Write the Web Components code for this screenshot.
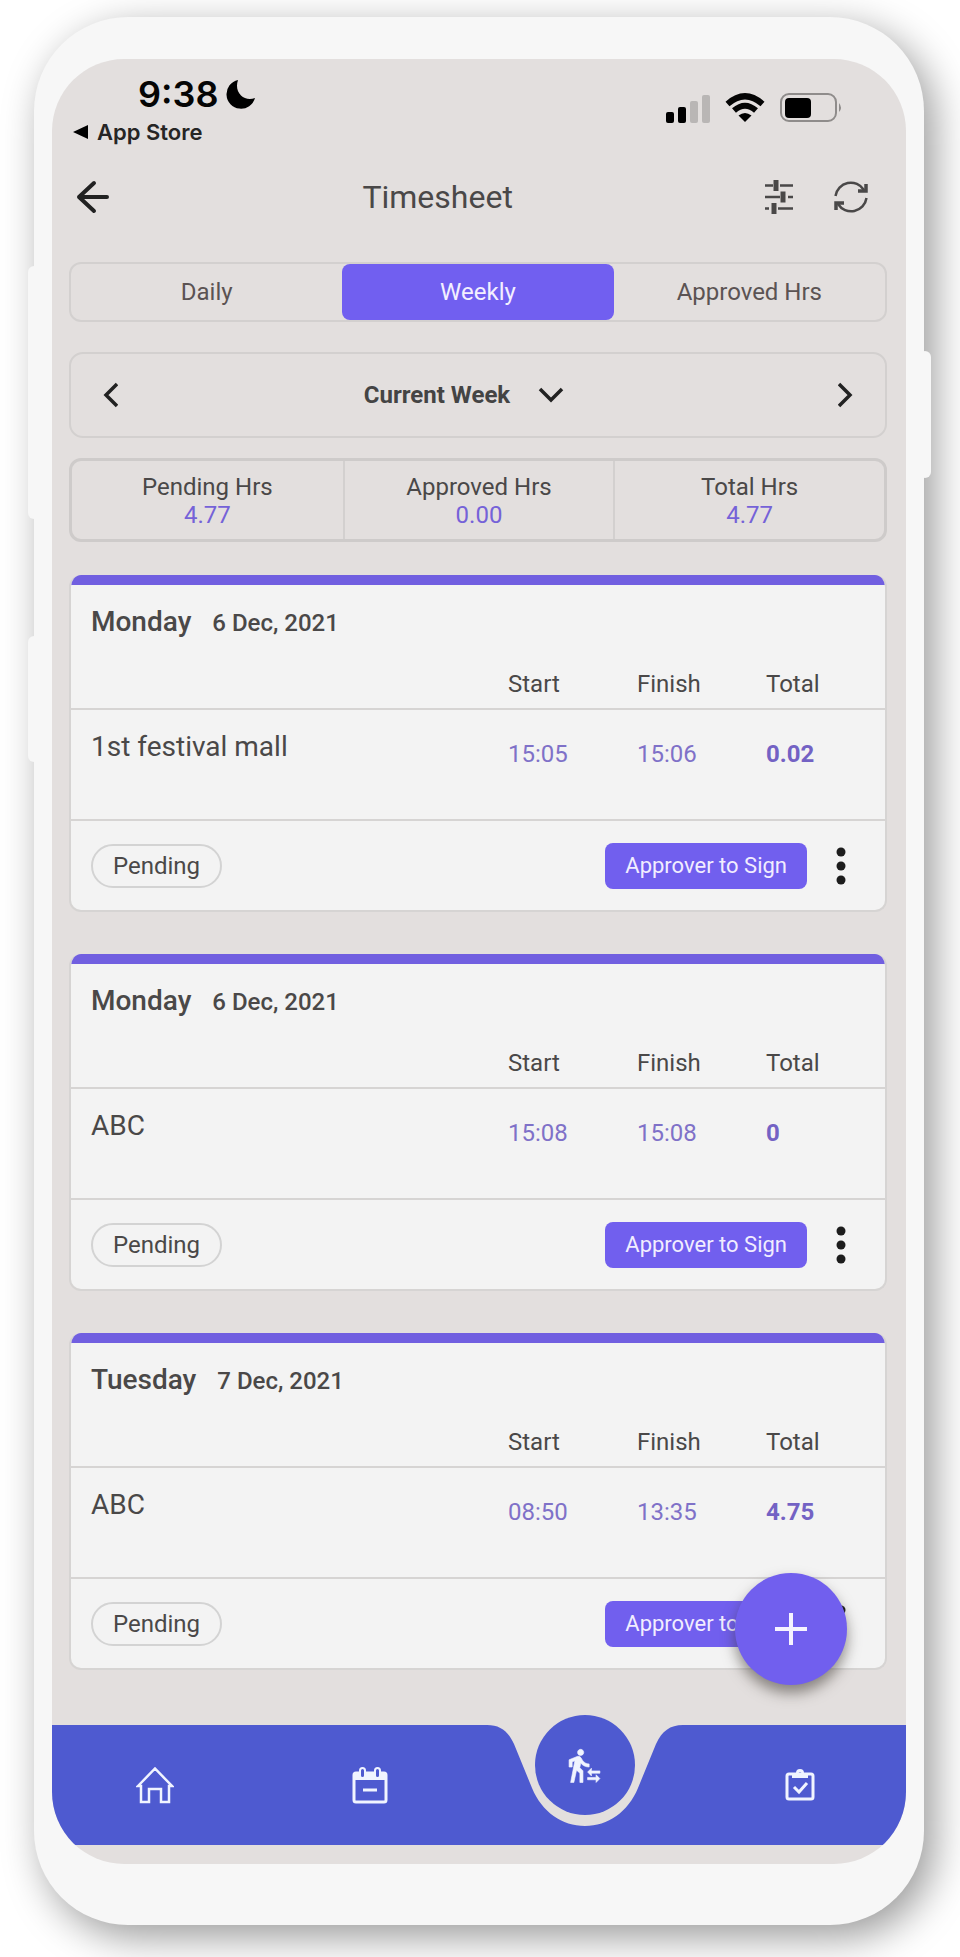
<!DOCTYPE html>
<html lang="en">
<head>
<meta charset="utf-8">
<meta name="viewport" content="width=device-width, initial-scale=1">
<title>Timesheet</title>
<style>
  body { margin: 0; background: #fff; font-family: Roboto, "Liberation Sans", sans-serif; color: #4a4848; }
</style>
</head>
<body>
<phone-frame>
  <status-bar></status-bar>
  <app-header>Timesheet</app-header>
  <main>
    <tab-switch></tab-switch>
    <week-picker>Current Week</week-picker>
    <hours-summary></hours-summary>
    <shift-card day="Monday" date="6 Dec, 2021" start="15:05" finish="15:06" total="0.02">1st festival mall</shift-card>
    <shift-card day="Monday" date="6 Dec, 2021" start="15:08" finish="15:08" total="0">ABC</shift-card>
    <shift-card day="Tuesday" date="7 Dec, 2021" start="08:50" finish="13:35" total="4.75">ABC</shift-card>
  </main>
  <add-button slot="floating"></add-button>
  <bottom-nav slot="nav"></bottom-nav>
</phone-frame>

<script>
const define = (name, html) => {
  const template = document.createElement('template');
  template.innerHTML = html;
  customElements.define(name, class extends HTMLElement {
    constructor() {
      super();
      const root = this.attachShadow({ mode: 'open' });
      root.append(template.content.cloneNode(true));
      root.querySelectorAll('[data-attr]').forEach(el => {
        el.textContent = this.getAttribute(el.dataset.attr);
      });
    }
  });
};

define('phone-frame', `
<style>
  :host { display: block; position: relative; margin: 17px 36px 32px 34px; padding: 42px 18px 61px; border-radius: 94px; background: #f7f7f7;
    box-shadow: 10px 12px 40px rgba(0,0,0,.4); }
  .key { position: absolute; width: 12px; background: #f7f7f7; border-radius: 6px; }
  .up { left: -6px; top: 249px; height: 253px; }
  .down { left: -6px; top: 619px; height: 126px; }
  .power { right: -7px; top: 334px; height: 127px; }
  .screen { position: relative; border-radius: 72px; overflow: hidden; background: #e3dfde; padding-bottom: 19px; }
  ::slotted(main) { display: flex; flex-direction: column; padding: 0 19px 0 17px; }
</style>
<span class="key up"></span><span class="key down"></span><span class="key power"></span>
<div class="screen"><slot></slot><slot name="floating"></slot><slot name="nav"></slot></div>`);

define('status-bar', `
<style>
  :host { display: flex; justify-content: space-between; padding: 13px 63px 0 21px; height: 88px; box-sizing: border-box; font-family: Inter, sans-serif; color: #050505; }
  .time { display: flex; align-items: center; gap: 8px; padding-left: 65px; font-size: 36px; line-height: 44px; font-weight: 600; }
  .back { display: flex; align-items: center; gap: 9px; font-size: 22px; line-height: 32px; font-weight: 600; color: #262525; text-decoration: none; }
  .icons { display: flex; align-items: flex-start; padding-top: 20px; gap: 14px; }
</style>
<div>
  <div class="time">9:38<svg width="30" height="30" viewBox="0 0 30 30"><path d="M12 1A14.500 14.500 0 1 0 29 19C24 21 18.500 20 15 16.500C11 12.500 10 7 12 1Z"/></svg></div>
  <a class="back" href="#"><svg width="15" height="14"><path d="M0 7 15 0V14Z"/></svg>App Store</a>
</div>
<div class="icons">
  <svg width="46" height="32"><rect x="1" y="20" width="8" height="11" rx="2"/><rect x="13" y="15" width="8" height="16" rx="2"/><g fill="#b9b6b5"><rect x="25" y="9" width="8" height="22" rx="2"/><rect x="37" y="3" width="8" height="28" rx="2"/></g></svg>
  <svg width="40" height="32" viewBox="0 0 40 32"><g fill="none" stroke="#050505" stroke-width="6"><path d="M2.500 12Q20-3.500 37.500 12"/><path d="M9 18.500Q20 9 31 18.500"/></g><path d="M20 30 13.500 23.500Q20 18.500 26.500 23.500Z"/></svg>
  <svg width="64" height="32" viewBox="0 0 64 32"><rect x="2" y="2" width="55" height="27" rx="8" fill="none" stroke="#8f8c8b" stroke-width="2"/><rect x="6" y="6" width="26" height="20" rx="4"/><path d="M60 11q4 5 0 9z" fill="#8f8c8b"/></svg>
</div>`);

define('app-header', `
<style>
  :host { display: grid; grid-template-columns: 100fr auto 124fr; align-items: center; height: 99px; padding: 0 38px 0 24px; }
  h1 { margin: 0; font-size: 32px; line-height: 40px; font-weight: 400; }
  button { display: flex; border: 0; padding: 0; background: none; color: #4a4848; }
  svg { fill: none; stroke: currentColor; }
  .back { color: #222; }
  .tools { display: flex; justify-content: flex-end; gap: 40px; }
</style>
<button class="back" aria-label="Back"><svg width="34" height="34" viewBox="0 0 34 34" stroke-width="4" stroke-linecap="round" stroke-linejoin="round"><path d="M31 17H3M18 3 3 17 18 31"/></svg></button>
<h1><slot></slot></h1>
<div class="tools">
  <button aria-label="Filter"><svg width="30" height="36" viewBox="0 0 30 36"><path stroke-width="2.500" d="M1 6.500h8M16 6.500h13M1 18h15M24 18h5M1 29.500h4M14 29.500h15"/><path stroke-width="5" d="M12 1v11M19 12.500v11M10 24v11"/></svg></button>
  <button aria-label="Refresh"><svg width="34" height="36" viewBox="0 0 34 36" stroke-width="2.500"><path d="M1.500 17A15.500 15.500 0 0 1 30 11M32.500 19A15.500 15.500 0 0 1 4 25"/><path stroke-width="3.500" d="M32 5v7h-8M2 31v-7h8"/></svg></button>
</div>`);

define('tab-switch', `
<style>
  :host { display: grid; grid-template-columns: repeat(3, 1fr); height: 60px; box-sizing: border-box; border: 2px solid #d3d0cf; border-radius: 12px; margin: 16px 0 30px; }
  button { border: 0; background: none; font: 24px/28px Roboto, sans-serif; color: #5b5353; padding: 0; }
  .on { background: #715ff0; color: #f3efff; border-radius: 8px; }
</style>
<button>Daily</button><button class="on">Weekly</button><button>Approved Hrs</button>`);

define('week-picker', `
<style>
  :host { display: flex; align-items: center; justify-content: space-between; height: 86px; box-sizing: border-box; padding: 0 31px; border: 2px solid #d3d0cf; border-radius: 14px; margin-bottom: 20px; }
  button { display: flex; align-items: center; gap: 28px; border: 0; padding: 0; background: none; font: 700 24px/28px Roboto, sans-serif; color: #444; }
  .label { margin-right: 28px; }
  svg { fill: none; stroke: #222; stroke-width: 3.500; }
</style>
<button aria-label="Previous week"><svg width="16" height="26"><path d="M15 2 4 13 15 24"/></svg></button>
<button class="label"><slot></slot><svg width="26" height="16"><path d="M2 2 13 13 24 2"/></svg></button>
<button aria-label="Next week"><svg width="16" height="26"><path d="M1 2 12 13 1 24"/></svg></button>`);

define('hours-summary', `
<style>
  :host { display: block; border: 3px solid #cecbca; border-radius: 12px; margin-bottom: 33px; }
  dl { display: grid; grid-template-columns: repeat(3, 1fr); margin: 0; height: 78px; }
  div { display: flex; flex-direction: column; justify-content: center; text-align: center; font-size: 24px; line-height: 28px; padding-top: 2px; }
  div + div { border-left: 2px solid #d3d0cf; }
  dd { margin: 0; color: #7562d8; }
</style>
<dl><div><dt>Pending Hrs</dt><dd>4.77</dd></div><div><dt>Approved Hrs</dt><dd>0.00</dd></div><div><dt>Total Hrs</dt><dd>4.77</dd></div></dl>`);

define('shift-card', `
<style>
  :host { display: block; height: 337px; box-sizing: border-box; margin-bottom: 42px; border: 2px solid #d6d4d3; border-width: 0 2px 2px; border-radius: 12px; overflow: hidden; background: #f3f3f3; }
  header { display: flex; align-items: baseline; gap: 21px; border-top: 10px solid #715fe0; padding: 19px 20px 0; height: 52px; font-weight: 500; font-size: 24px; line-height: 36px; }
  h2 { margin: 0; font-size: 28px; font-weight: 500; line-height: 36px; }
  table { width: 100%; border-collapse: collapse; table-layout: fixed; font-size: 24px; line-height: 28px; }
  th, td { padding: 0; text-align: left; font-weight: 400; vertical-align: top; width: 129px; }
  th:first-child { width: 437px; }
  th:last-child, td:last-child { width: auto; }
  thead th { height: 53px; padding-top: 14px; box-sizing: border-box; }
  thead tr, tbody tr { border-bottom: 2px solid #d6d4d3; }
  tbody td { height: 79px; padding-top: 30px; color: #7f71c8; }
  tbody th { height: 86px; padding: 21px 0 0 20px; font-size: 28px; line-height: 32px; box-sizing: border-box; }
  tbody td:last-child { font-weight: 700; color: #7362c4; }
  footer { display: flex; align-items: center; padding: 0 39px 0 20px; height: 89px; }
  .state { border: 2px solid #d3d3d3; border-radius: 22px; padding: 6px 20px; font-size: 24px; line-height: 28px; margin-right: auto; }
  button { border: 0; background: none; padding: 0; display: flex; }
  .sign { background: #715fee; color: #f1edff; border-radius: 8px; font: 22px/28px Roboto, sans-serif; padding: 9px 20px; margin-right: 29px; }
</style>
<header><h2 data-attr="day"></h2><span data-attr="date"></span></header>
<table>
  <thead><tr><th></th><th>Start</th><th>Finish</th><th>Total</th></tr></thead>
  <tbody><tr><th><slot></slot></th><td data-attr="start"></td><td data-attr="finish"></td><td data-attr="total"></td></tr></tbody>
</table>
<footer><span class="state">Pending</span><button class="sign">Approver to Sign</button><button aria-label="More"><svg width="10" height="38" fill="#1c1c1c"><circle cx="5" cy="5" r="4.500"/><circle cx="5" cy="19" r="4.500"/><circle cx="5" cy="33" r="4.500"/></svg></button></footer>`);

define('add-button', `
<style>
  :host { position: absolute; right: 59px; bottom: 179px; display: block; }
  button { display: flex; align-items: center; justify-content: center; width: 112px; height: 112px; border: 0; border-radius: 50%; background: #715fee; box-shadow: 0 8px 14px rgba(60,55,50,.55); }
</style>
<button aria-label="Add timesheet"><svg width="32" height="32"><path d="M16 0V32M0 16H32" stroke="#f6f3ff" stroke-width="4"/></svg></button>`);

define('bottom-nav', `
<style>
  :host { display: block; position: relative; height: 120px; margin-top: 13px; color: #f0f4ff; }
  .bar { display: flex; height: 100%; }
  .bar i { flex: 1; background: #4e5ad0; }
  .bar i:first-child { flex: none; width: 430px; }
  .bar svg { flex: none; fill: #4e5ad0; }
  nav { position: absolute; inset: 0 -1px 0 -4px; display: grid; grid-template-columns: repeat(4, 1fr); align-items: center; justify-items: center; }
  a { display: flex; color: inherit; }
  nav svg { fill: none; stroke: currentColor; }
  .current { align-self: start; margin-top: -10px; width: 100px; height: 100px; border-radius: 50%; background: #4e5ad0; align-items: center; justify-content: center; }
</style>
<div class="bar"><i></i><svg width="206" height="120" viewBox="0 0 206 120"><path d="M0 0H5C18 0 26 6 32 19L50 63C60 87 80 101 103 101S146 87 156 63L174 19C180 6 188 0 201 0H206V120H0Z"/></svg><i></i></div>
<nav aria-label="Main">
  <a href="#" aria-label="Home"><svg width="38" height="38" viewBox="0 0 38 38" stroke-width="2.500"><path d="M2 20 19 2.500 36 20H33V36H25V23H13V36H5V20Z"/></svg></a>
  <a href="#" aria-label="Calendar"><svg width="36" height="38" viewBox="0 0 36 38" stroke-width="3"><rect x="2" y="7" width="32" height="29" rx="2"/><path d="M2 6H34V14H2Z" fill="currentColor" stroke="none"/><rect x="8" y="2" width="5" height="10" rx="2.500" fill="#4e5ad0" stroke-width="2"/><rect x="23" y="2" width="5" height="10" rx="2.500" fill="#4e5ad0" stroke-width="2"/><path d="M11 24H25"/></svg></a>
  <a class="current" href="#" aria-label="Shifts"><svg width="37" height="37" viewBox="0 0 24 24"><path fill="currentColor" stroke="currentColor" stroke-width=".4" d="M16.490 15.500v-1.750L14 16.250l2.490 2.500V17H22v-1.500zm3.020 4.250H14v1.500h5.510V23L22 20.500 19.510 18zM9.500 5.500c1.100 0 2-.9 2-2s-.9-2-2-2-2 .9-2 2 .9 2 2 2zM5.750 8.900 3 23h2.100l1.750-8L9 17v6h2v-7.550L8.950 13.400l.6-3C10.850 12 12.800 13 15 13v-2c-1.850 0-3.450-1-4.350-2.450l-.95-1.600C9.350 6.350 8.700 6 8 6c-.25 0-.5.05-.75.15L2 8.300V13h2V9.650z"/></svg></a>
  <a href="#" aria-label="Tasks"><svg width="30" height="32" viewBox="0 0 30 32" stroke-width="3"><rect x="2" y="5" width="26" height="25" rx="2"/><path fill-rule="evenodd" d="M7 4h4a4 4 0 0 1 8 0h4v5H7zM13.500 4.500a1.500 1.500 0 1 0 3 0 1.500 1.500 0 1 0-3 0z" fill="currentColor" stroke="none"/><path d="M9 18l5 5 8-9"/></svg></a>
</nav>`);
</script>
</body>
</html>
